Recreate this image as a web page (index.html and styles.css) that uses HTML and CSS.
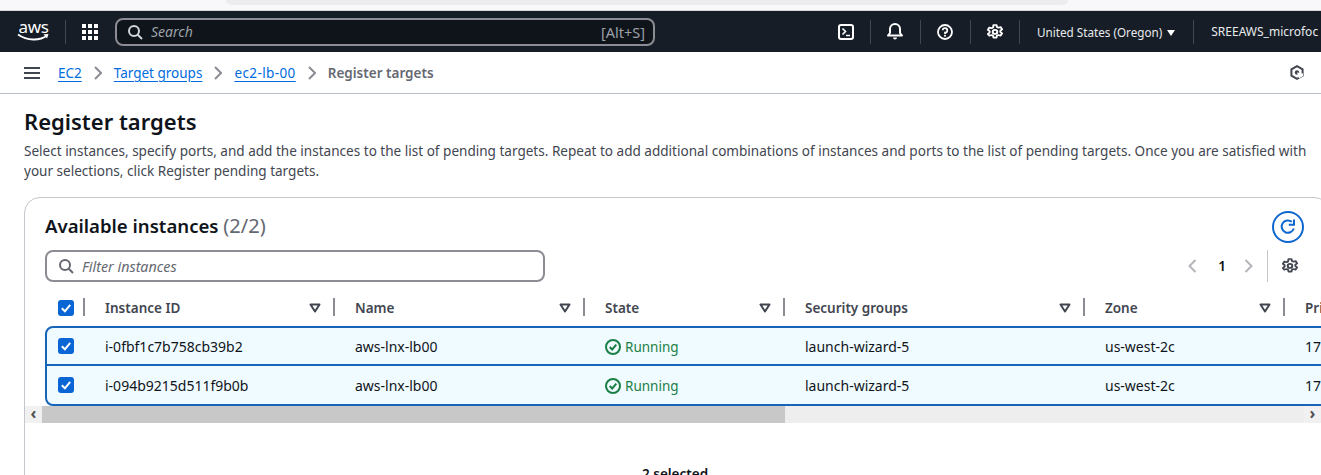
FILE: index.html
```html
<!DOCTYPE html>
<html lang="en">
<head>
	<meta charset="UTF-8">
	<title>Register targets</title>
	<link rel="stylesheet" href="styles.css">
</head>
<body>
	<svg class="defs" width="0" height="0">
		<symbol id="gear" viewBox="1 0 14 16" preserveAspectRatio="none"><path d="M6.7 1h2.6l.4 2 1.3.7 1.9-.7 1.3 2.3-1.5 1.3v1.5l1.5 1.3-1.3 2.3-1.9-.7-1.3.7-.4 2H6.700l-.4-2-1.300-.7-1.900.7L1.800 9.900l1.500-1.300V7.100L1.800 5.800l1.300-2.300 1.900.7 1.300-.7z" fill="none" stroke="currentColor" stroke-width="1.700" stroke-linejoin="round"/><circle cx="8" cy="7.900" r="2" fill="none" stroke="currentColor" stroke-width="1.700"/></symbol>
		<symbol id="search" viewBox="0 0 16 16"><circle cx="7" cy="7" r="5" fill="none" stroke="currentColor" stroke-width="2"/><path d="M10.500 10.500 15 15" stroke="currentColor" stroke-width="2"/></symbol>
		<symbol id="check" viewBox="0 0 16 16"><rect width="16" height="16" rx="3" fill="#0a66d4"/><path d="M3.800 8.300 6.900 11.300 12.200 4.900" fill="none" stroke="#fff" stroke-width="2"/></symbol>
		<symbol id="caret" viewBox="0 0 12 10"><path d="M1.500 1.500h9L6 8.500z" fill="none" stroke="currentColor" stroke-width="2" stroke-linejoin="round"/></symbol>
		<symbol id="ok" viewBox="0 0 16 16"><circle cx="8" cy="8" r="7" fill="none" stroke="currentColor" stroke-width="2"/><path d="M4.700 8 7.200 10.500 11.300 5.700" fill="none" stroke="currentColor" stroke-width="2"/></symbol>
		<symbol id="crumb" viewBox="0 0 8 14"><path d="M1 1l6 6-6 6" fill="none" stroke="currentColor" stroke-width="2"/></symbol>
	</svg>

	<div class="tabstrip"><div class="tab"></div></div>

	<nav class="topnav">
		<div class="logo">
			<span class="logo-text">aws</span>
			<svg width="33" height="9" viewBox="0 0 33 9"><path d="M1 1.500C10 8 23 8 30 2.500" fill="none" stroke="#fff" stroke-width="1.800"/><path d="M26.500 1.200 31.500 1 30 5.500" fill="#fff"/></svg>
		</div>
		<span class="nav-sep first"></span>
		<svg class="apps" width="16" height="16" viewBox="0 0 16 16" fill="#fff"><rect width="4" height="4"/><rect x="6" width="4" height="4"/><rect x="12" width="4" height="4"/><rect y="6" width="4" height="4"/><rect x="6" y="6" width="4" height="4"/><rect x="12" y="6" width="4" height="4"/><rect y="12" width="4" height="4"/><rect x="6" y="12" width="4" height="4"/><rect x="12" y="12" width="4" height="4"/></svg>
		<div class="search">
			<svg width="16" height="16"><use href="#search"/></svg>
			<span class="search-hint">Search</span>
			<span class="shortcut">[Alt+S]</span>
		</div>
		<div class="nav-icons">
			<svg class="nav-icon" width="16" height="16" viewBox="0 0 16 16"><rect x="1" y="1" width="14" height="14" rx="2" fill="none" stroke="#fff" stroke-width="2"/><path d="M4.500 4.500 7.500 7.500 4.500 10.500M8 11.500h4" fill="none" stroke="#fff" stroke-width="1.600"/></svg>
			<span class="nav-sep"></span>
			<svg class="nav-icon" width="16" height="17" viewBox="0 0 16 17"><path d="M1 12.500h14l-2-2.500V6A5 5 0 0 0 3 6v4z" fill="none" stroke="#fff" stroke-width="2" stroke-linejoin="round"/><path d="M6 14.500a2 2 0 0 0 4 0z" fill="#fff"/></svg>
			<span class="nav-sep"></span>
			<svg class="nav-icon" width="16" height="16" viewBox="0 0 16 16"><circle cx="8" cy="8" r="7" fill="none" stroke="#fff" stroke-width="1.800"/><path d="M5.700 6.300A2.300 2.300 0 1 1 8 8.700v1.200" fill="none" stroke="#fff" stroke-width="1.700"/><rect x="7.100" y="10.800" width="1.800" height="1.800" fill="#fff"/></svg>
			<span class="nav-sep"></span>
			<svg class="nav-icon white" width="16" height="16"><use href="#gear"/></svg>
			<span class="nav-sep"></span>
			<span class="region">United States (Oregon)<i class="region-caret"></i></span>
			<span class="nav-sep"></span>
			<span class="account">SREEAWS_microfoc</span>
		</div>
	</nav>

	<div class="crumbs">
		<svg class="menu" width="16" height="12" viewBox="0 0 16 12" fill="#424650"><rect width="16" height="2"/><rect y="5" width="16" height="2"/><rect y="10" width="16" height="2"/></svg>
		<a href="#">EC2</a>
		<svg class="crumb-sep" width="8" height="14"><use href="#crumb"/></svg>
		<a href="#">Target groups</a>
		<svg class="crumb-sep" width="8" height="14"><use href="#crumb"/></svg>
		<a class="crumb-wide" href="#">ec2-lb-00</a>
		<svg class="crumb-sep" width="8" height="14"><use href="#crumb"/></svg>
		<span class="crumb-current">Register targets</span>
		<svg class="hexa" width="14" height="15" viewBox="0 0 14 15"><path d="M7 1.200 12.600 4.300V10.700L7 13.800 1.400 10.700V4.300z" fill="none" stroke="#424650" stroke-width="2"/><circle cx="7" cy="7.500" r="2.200" fill="#424650"/><path d="M7 7.500 13 8.500V11L9 13.500z" fill="#fff"/></svg>
	</div>

	<main class="content">
		<h1>Register targets</h1>
		<p class="lead">Select instances, specify ports, and add the instances to the list of pending targets. Repeat to add additional combinations of instances and ports to the list of pending targets. Once you are satisfied with your selections, click Register pending targets.</p>

		<section class="card">
			<div class="card-head">
				<h2>Available instances <span class="count">(2/2)</span></h2>
				<button class="refresh">
					<svg width="18" height="18" viewBox="0 0 18 18"><path d="M14.800 10.500A6.200 6.200 0 1 1 12.800 3.800" fill="none" stroke="#0f68d0" stroke-width="2"/><path d="M9.800 6.700h5.200V1.500" fill="none" stroke="#0f68d0" stroke-width="2"/></svg>
				</button>
			</div>
			<div class="tools">
				<div class="filter">
					<svg width="16" height="16"><use href="#search"/></svg>
					<span>Filter instances</span>
				</div>
				<div class="pager">
					<svg class="pg-arrow" width="9" height="14" viewBox="0 0 8 14"><path d="M7 1 1 7l6 6" fill="none" stroke="currentColor" stroke-width="2"/></svg>
					<b>1</b>
					<svg class="pg-arrow" width="9" height="14"><use href="#crumb"/></svg>
					<span class="pg-sep"></span>
					<svg class="pg-gear" width="16" height="16"><use href="#gear"/></svg>
				</div>
			</div>

			<div class="table">
				<div class="row head">
					<div class="cell box"><svg width="16" height="16"><use href="#check"/></svg><i class="divider"></i></div>
					<div class="cell">Instance ID<svg class="caret" width="12" height="10"><use href="#caret"/></svg><i class="divider"></i></div>
					<div class="cell">Name<svg class="caret" width="12" height="10"><use href="#caret"/></svg><i class="divider"></i></div>
					<div class="cell">State<svg class="caret" width="12" height="10"><use href="#caret"/></svg><i class="divider"></i></div>
					<div class="cell">Security groups<svg class="caret" width="12" height="10"><use href="#caret"/></svg><i class="divider"></i></div>
					<div class="cell">Zone<svg class="caret" width="12" height="10"><use href="#caret"/></svg><i class="divider"></i></div>
					<div class="cell">Pri</div>
				</div>
				<div class="selected-rows">
					<div class="row body">
						<div class="cell box"><svg width="16" height="16"><use href="#check"/></svg></div>
						<div class="cell">i-0fbf1c7b758cb39b2</div>
						<div class="cell">aws-lnx-lb00</div>
						<div class="cell running"><svg width="16" height="16"><use href="#ok"/></svg>Running</div>
						<div class="cell">launch-wizard-5</div>
						<div class="cell">us-west-2c</div>
						<div class="cell">17</div>
					</div>
					<div class="row body">
						<div class="cell box"><svg width="16" height="16"><use href="#check"/></svg></div>
						<div class="cell">i-094b9215d511f9b0b</div>
						<div class="cell">aws-lnx-lb00</div>
						<div class="cell running"><svg width="16" height="16"><use href="#ok"/></svg>Running</div>
						<div class="cell">launch-wizard-5</div>
						<div class="cell">us-west-2c</div>
						<div class="cell">17</div>
					</div>
				</div>
			</div>

			<div class="scrollbar">
				<span class="sb-btn">&#8249;</span>
				<span class="sb-thumb"></span>
				<span class="sb-track"></span>
				<span class="sb-btn">&#8250;</span>
			</div>

			<p class="selected-note">2 selected</p>
		</section>
	</main>
</body>
</html>
```

FILE: styles.css
```css
* { box-sizing: border-box; }

html, body {
	margin: 0;
	height: 475px;
	overflow: hidden;
}
body {
	font-family: "Noto Sans", "Open Sans", sans-serif;
	font-size: 13.5px;
	color: #16191f;
	background: #fff;
}
.defs { position: absolute; }

.tabstrip {
	height: 11px;
	background: #f8f7fa;
	border-bottom: 1px solid #d8d8dc;
	padding-left: 226px;
}
.tab {
	width: 842px;
	height: 5px;
	background: #ececee;
	border-radius: 0 0 5px 5px;
}

.topnav {
	height: 41px;
	background: #161d26;
	display: flex;
	align-items: center;
	padding-left: 17px;
	color: #fff;
	white-space: nowrap;
}
.logo {
	width: 33px;
	display: flex;
	flex-direction: column;
	align-items: center;
	margin-top: -2px;
}
.logo-text {
	font-size: 17px;
	line-height: 14px;
	letter-spacing: -0.3px;
}
.logo svg { margin-top: -1px; }
.nav-sep {
	width: 1px;
	height: 24px;
	background: #424650;
	flex: none;
}
.nav-sep.first { margin-left: 15px; }
.apps {
	margin-left: 16px;
	flex: none;
}
.search {
	flex: none;
	width: 540px;
	height: 28px;
	margin-left: 17px;
	background: #0f141a;
	border: 2px solid #8c8c94;
	border-radius: 8px;
	display: flex;
	align-items: center;
	padding: 0 8px 0 10px;
	color: #d1d5db;
}
.search-hint {
	font-size: 14px;
	font-style: italic;
	margin-left: 8px;
	color: #9ba0a8;
}
.shortcut {
	font-size: 14.5px;
	margin-left: auto;
	color: #9ba0a8;
}
.nav-icons {
	flex: none;
	display: flex;
	align-items: center;
	margin-left: 183px;
}
.nav-icon {
	flex: none;
	margin-right: 16px;
}
.nav-sep + .nav-icon {
	margin-left: 16px;
	margin-right: 17px;
}
.nav-sep + .nav-icon.white {
	color: #fff;
	margin-right: 16px;
}
.region {
	font-size: 11.7px;
	margin: 0 18px 0 17px;
	color: #e8eaed;
}
.region-caret {
	display: inline-block;
	margin-left: 5px;
	margin-bottom: 1px;
	border-left: 4.500px solid transparent;
	border-right: 4.500px solid transparent;
	border-top: 6px solid #fff;
}
.account {
	font-size: 12px;
	margin-left: 17px;
	color: #e8eaed;
}

.crumbs {
	height: 42px;
	border-bottom: 1px solid #b6bec9;
	display: flex;
	align-items: center;
	padding: 0 17px 0 24px;
}
.menu { margin-right: 18px; }
.crumbs a {
	color: #006ce0;
	text-underline-offset: 3px;
}
.crumbs a.crumb-wide { letter-spacing: 0.4px; }
.crumb-sep {
	margin: 0 12px;
	color: #8c8c94;
}
.crumb-current {
	font-weight: 600;
	color: #656871;
}
.hexa { margin-left: auto; }

.content { padding: 13px 0 0 24px; }
h1 {
	margin: 0;
	font-size: 22px;
	line-height: 28px;
	font-weight: 600;
	color: #0f141a;
}
.lead {
	margin: 6px 0 0;
	width: 1292px;
	font-size: 13.55px;
	line-height: 20px;
	color: #424650;
}

.card {
	margin-top: 16px;
	width: 1306px;
	height: 300px;
	border: 1px solid #c6c6cd;
	border-radius: 16px;
	overflow: hidden;
}
.card-head {
	width: 1279px;
	display: flex;
	justify-content: space-between;
	align-items: flex-start;
	padding: 13px 0 0 20px;
}
h2 {
	margin: 0;
	font-size: 18.600px;
	line-height: 30px;
	font-weight: 600;
	color: #0f141a;
}
.count {
	font-size: 20px;
	font-weight: 400;
	color: #656871;
}
.refresh {
	width: 32px;
	height: 32px;
	padding: 0;
	background: #fff;
	border: 2px solid #0f68d0;
	border-radius: 50%;
	display: flex;
	align-items: center;
	justify-content: center;
}

.tools {
	width: 1273px;
	display: flex;
	align-items: center;
	justify-content: space-between;
	padding-left: 20px;
	margin-top: 7px;
}
.filter {
	width: 500px;
	height: 32px;
	border: 2px solid #8c8c94;
	border-radius: 8px;
	display: flex;
	align-items: center;
	padding-left: 11px;
	color: #656871;
}
.filter span {
	font-size: 14.300px;
	font-style: italic;
	margin-left: 8px;
}
.pager {
	display: flex;
	align-items: center;
	height: 32px;
	color: #0f141a;
}
.pg-arrow { color: #b4b4bb; }
.pager b {
	margin: 0 18px 0 21px;
	font-weight: 600;
}
.pg-sep {
	width: 1px;
	height: 32px;
	margin: 0 14px;
	background: #c6c6cd;
}
.pg-gear { color: #424650; }

.table {
	margin: 7px 0 0 20px;
	width: 1320px;
}
.row {
	display: grid;
	grid-template-columns: 40px 250px 250px 200px 300px 200px 80px;
	align-items: center;
}
.row.head {
	height: 38px;
	font-weight: 600;
	color: #424650;
}
.cell {
	height: 100%;
	display: flex;
	align-items: center;
	padding-left: 20px;
	position: relative;
	white-space: nowrap;
}
.cell.box { padding-left: 13px; }
.caret {
	position: absolute;
	right: 14px;
	top: 14px;
}
.divider {
	position: absolute;
	right: 0;
	top: 9px;
	width: 2px;
	height: 18px;
	background: #8c8c94;
}
.selected-rows {
	border: 2px solid #1864b8;
	border-radius: 8px 0 0 8px;
	background: #f0fbff;
	margin-top: -1px;
}
.row.body {
	height: 36px;
	font-size: 14px;
	color: #0f141a;
	grid-template-columns: 38px 250px 250px 200px 300px 200px 80px;
}
.row.body + .row.body {
	height: 40px;
	border-top: 2px solid #1864b8;
}
.selected-rows .cell.box { padding-left: 11px; }
.cell.running {
	font-size: 13.5px;
	padding-top: 1px;
	color: #1a7f45;
}
.running svg { margin-right: 4px; }

.scrollbar {
	display: flex;
	height: 17px;
	width: 1296px;
}
.sb-btn {
	width: 17px;
	background: #f1f1f1;
	color: #505050;
	font-size: 16px;
	font-weight: 700;
	line-height: 15px;
	text-align: center;
}
.sb-thumb {
	width: 743px;
	background: #c8c8c8;
}
.sb-track {
	flex: 1;
	background: #eeeeee;
}

.selected-note {
	margin: 41px 0 0 617px;
	font-weight: 600;
	line-height: 20px;
	color: #0f141a;
}
```
